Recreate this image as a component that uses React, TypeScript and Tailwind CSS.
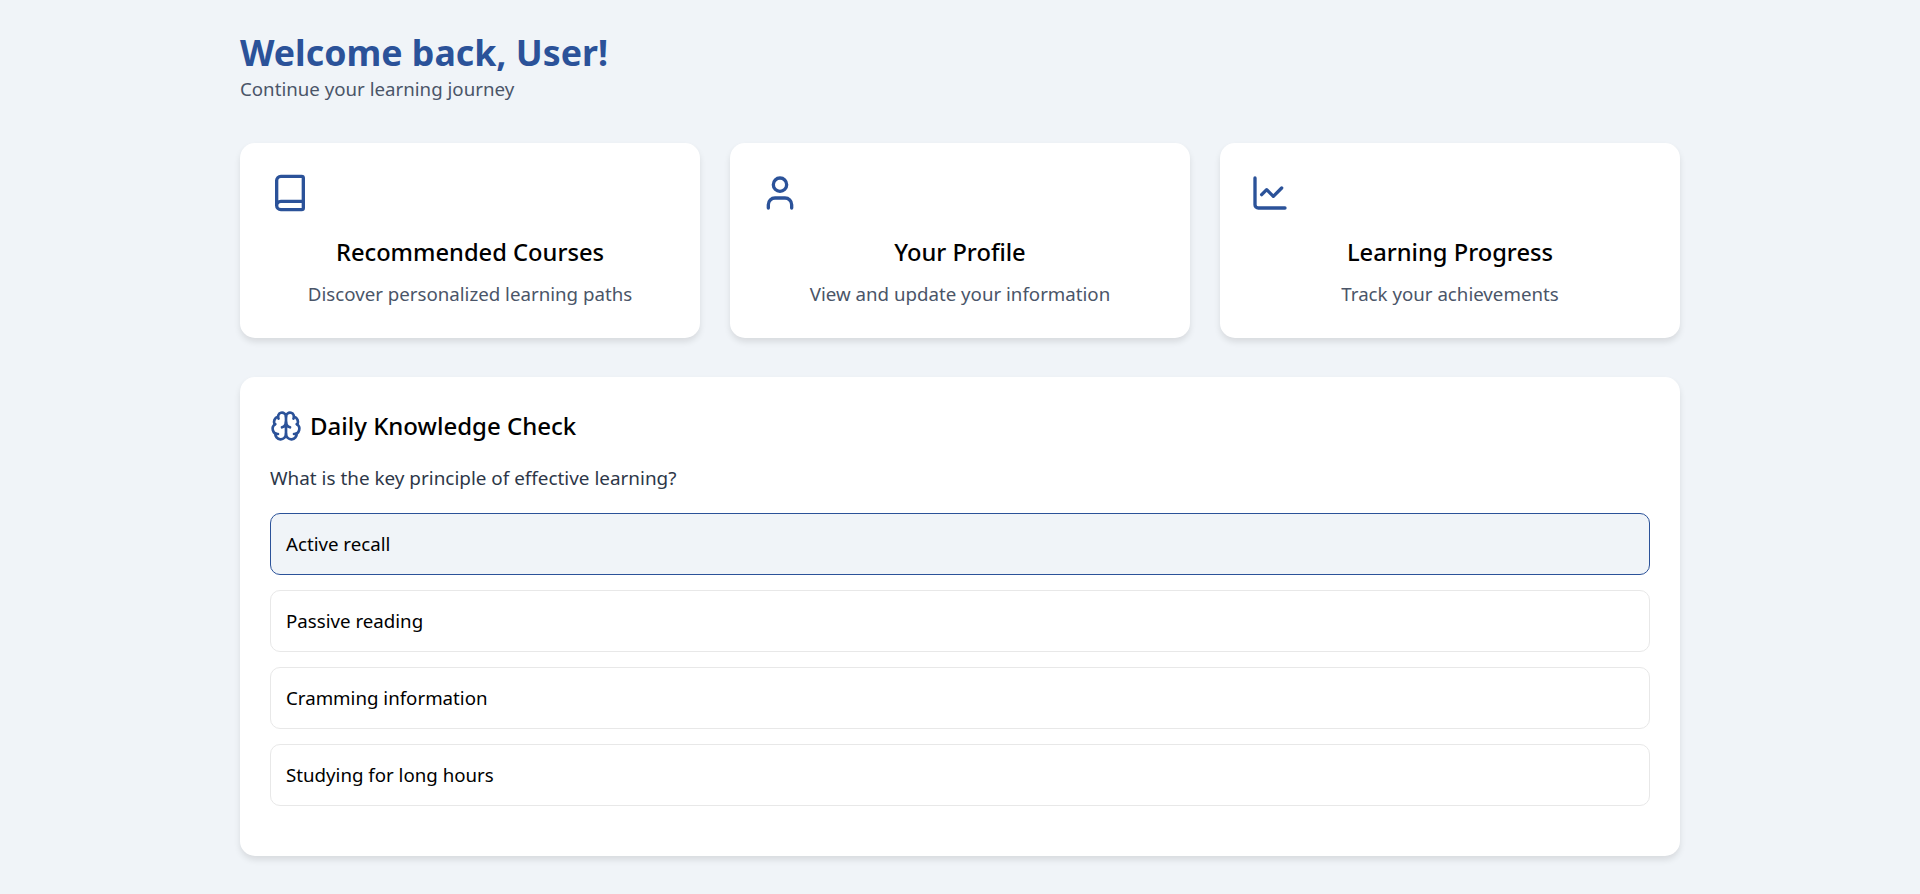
import { Book, Brain, ChartLine, User, type LucideIcon } from "lucide-react";

const cards: { icon: LucideIcon; title: string; text: string }[] = [
  { icon: Book, title: "Recommended Courses", text: "Discover personalized learning paths" },
  { icon: User, title: "Your Profile", text: "View and update your information" },
  { icon: ChartLine, title: "Learning Progress", text: "Track your achievements" },
];

const options = ["Active recall", "Passive reading", "Cramming information", "Studying for long hours"];

export default function App() {
  return (
    <div className="min-h-[894px] bg-[#f0f4f8] px-[240px] pt-[30px] font-['Noto_Sans',sans-serif] text-black">
      <header className="mb-[40px]">
        <h1 className="text-[35.7px] leading-[44px] font-bold text-[#2b5299]">Welcome back, User!</h1>
        <p className="mt-[1px] text-[18.7px] leading-[28px] text-[#4a5568]">Continue your learning journey</p>
      </header>

      <div className="mb-[39px] grid grid-cols-3 gap-[30px]">
        {cards.map((card) => (
          <div key={card.title} className="h-[195px] rounded-[15px] bg-white p-[30px] shadow-[0_4px_6px_rgba(0,0,0,0.1)]">
            <card.icon className="h-10 w-10 text-[#2b5299]" />
            <h3 className="mt-[20px] text-center text-[23.7px] leading-[38px] font-medium">{card.title}</h3>
            <p className="mt-[9px] text-center text-[18.7px] leading-[28px] text-[#4a5568]">{card.text}</p>
          </div>
        ))}
      </div>

      <div className="h-[479px] rounded-[15px] bg-white p-[30px] shadow-[0_4px_6px_rgba(0,0,0,0.1)]">
        <div className="flex items-center gap-[8px]">
          <Brain className="h-8 w-8 text-[#2b5299]" />
          <h2 className="text-[24px] leading-[38px] font-medium">Daily Knowledge Check</h2>
        </div>
        <p className="mt-[19px] text-[18.9px] leading-[28px] text-[#2d3748]">What is the key principle of effective learning?</p>
        <div className="mt-[21px] flex flex-col gap-[15px]">
          {options.map((option, i) => (
            <div
              key={option}
              className={
                i === 0
                  ? "rounded-[10px] border border-[#2b5299] bg-[#f0f4f8] p-[15px] text-[18.7px] leading-[30px]"
                  : "rounded-[10px] border border-[#e8e8e8] bg-white p-[15px] text-[18.7px] leading-[30px]"
              }
            >
              {option}
            </div>
          ))}
        </div>
      </div>
    </div>
  );
}
